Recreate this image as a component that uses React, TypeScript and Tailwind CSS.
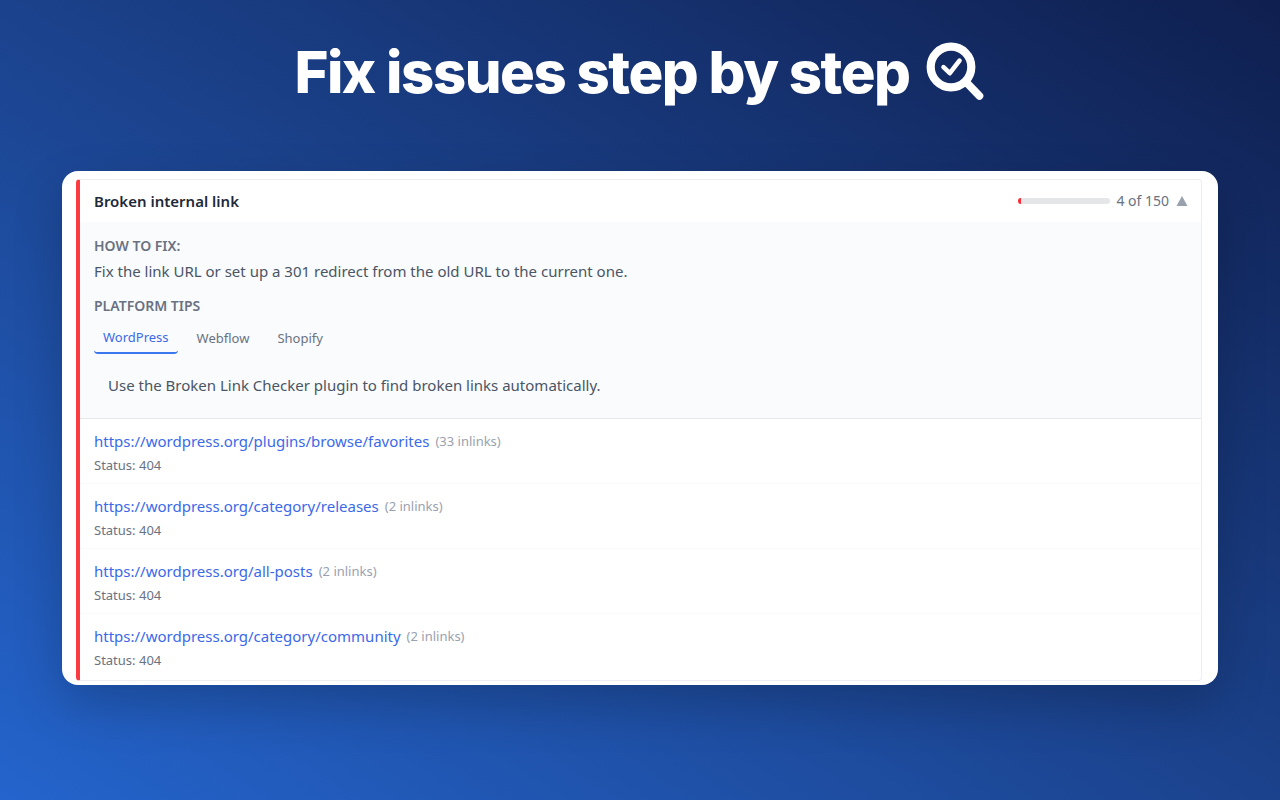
import React, {useState} from "react";

const platforms = [
    {name: "WordPress", tip: "Use the Broken Link Checker plugin to find broken links automatically."},
    {name: "Webflow", tip: "Check the link settings panel of every page before you publish."},
    {name: "Shopify", tip: "Add a URL redirect under Online Store, Navigation."},
];

const links = [
    {url: "https://wordpress.org/plugins/browse/favorites", inlinks: 33, status: 404},
    {url: "https://wordpress.org/category/releases", inlinks: 2, status: 404},
    {url: "https://wordpress.org/all-posts", inlinks: 2, status: 404},
    {url: "https://wordpress.org/category/community", inlinks: 2, status: 404},
];

const SearchCheckIcon = () => (
    <svg viewBox="0 0 60 60" className="size-[60px]" fill="none" stroke="currentColor" strokeLinecap="round"
         strokeLinejoin="round" aria-hidden="true">
        <circle cx="25" cy="25" r="20.3" strokeWidth="8.2"/>
        <path d="M41 41l12.5 13" strokeWidth="7.6"/>
        <path d="M17.5 25.2l6.3 6L33.5 18.6" strokeWidth="4.6"/>
    </svg>
);

const IssueHeader = ({open, onToggle}: { open: boolean; onToggle: () => void }) => (
    <div className="flex items-center justify-between h-[42px] pl-3.5 pr-3">
        <h2 className="text-[15px] font-semibold text-gray-800">Broken internal link</h2>
        <div className="flex items-center gap-1.5 text-sm text-gray-500">
            <div className="w-[92px] h-1.5 rounded-full bg-[#e5e6e8] overflow-hidden">
                <div className="h-full bg-red-500" style={{width: `${(4 / 150) * 100}%`}}/>
            </div>
            <span>4 of 150</span>
            <button type="button" onClick={onToggle} aria-label="Toggle issue" className="text-gray-400">
                <svg viewBox="0 0 14 12" className={open ? "w-3.5 h-3" : "w-3.5 h-3 rotate-180"} fill="currentColor">
                    <path d="M7 1l5.5 10h-11z"/>
                </svg>
            </button>
        </div>
    </div>
);

const FixGuide = () => {
    const [active, setActive] = useState(0);

    return (
        <div className="px-3.5 pt-3.5 pb-[22px] bg-[#f9fbfc] border-b border-gray-200">
            <h3 className="text-sm leading-5 font-semibold text-gray-500">HOW TO FIX:</h3>
            <p className="mt-1 text-[15px] leading-[22px] text-gray-600">
                Fix the link URL or set up a 301 redirect from the old URL to the current one.
            </p>
            <h3 className="mt-3.5 text-sm leading-5 font-semibold text-gray-500">PLATFORM TIPS</h3>
            <div className="flex gap-2.5 mt-2" role="tablist">
                {platforms.map((platform, i) => (
                    <button key={platform.name} type="button" role="tab" aria-selected={i === active}
                            onClick={() => setActive(i)}
                            className={i === active
                                ? "h-[30px] px-[9px] text-[13px] text-[#3b69ea] border-b-2 border-[#3b78f0] rounded"
                                : "h-[30px] px-[9px] text-[13px] text-gray-500"}>
                        {platform.name}
                    </button>
                ))}
            </div>
            <p className="mt-5 px-3.5 text-[15px] leading-[22px] text-gray-600">{platforms[active].tip}</p>
        </div>
    );
};

const App = () => {
    const [open, setOpen] = useState(true);

    return (
        <main className="min-h-screen px-[62px] pt-9 pb-24 bg-[linear-gradient(to_bottom_left,#0f1f4f,#1b428c_50%,#2464cc)] font-['Noto_Sans','Open_Sans',sans-serif]">
            <header className="flex items-center justify-center gap-4 text-white">
                <h1 className="font-[Inter,sans-serif] text-[58px] leading-[72px] font-extrabold tracking-tight">
                    Fix issues step by step
                </h1>
                <SearchCheckIcon/>
            </header>

            {/* Issue card */}
            <section className="mt-[63px] pt-2 pr-4 pb-1 pl-3.5 rounded-2xl bg-white shadow-[0_20px_50px_rgba(0,0,0,0.2)]">
                <div className="border border-gray-200/70 border-l-4 border-l-[#fb3b40] rounded overflow-hidden">
                    <IssueHeader open={open} onToggle={() => setOpen(!open)}/>
                    {open && (
                        <>
                            <FixGuide/>
                            <ul className="pb-0.5 divide-y divide-gray-50">
                                {links.map((link) => (
                                    <li key={link.url} className="px-3.5 pt-2.5 pb-1.5">
                                        <div className="flex items-center gap-1.5 leading-6">
                                            <a href={link.url} className="text-[15px] text-[#3b69ea]">{link.url}</a>
                                            <span className="text-[13px] text-gray-400">({link.inlinks} inlinks)</span>
                                        </div>
                                        <p className="text-[13px] leading-6 text-gray-500">Status: {link.status}</p>
                                    </li>
                                ))}
                            </ul>
                        </>
                    )}
                </div>
            </section>
        </main>
    );
};

export default App;
